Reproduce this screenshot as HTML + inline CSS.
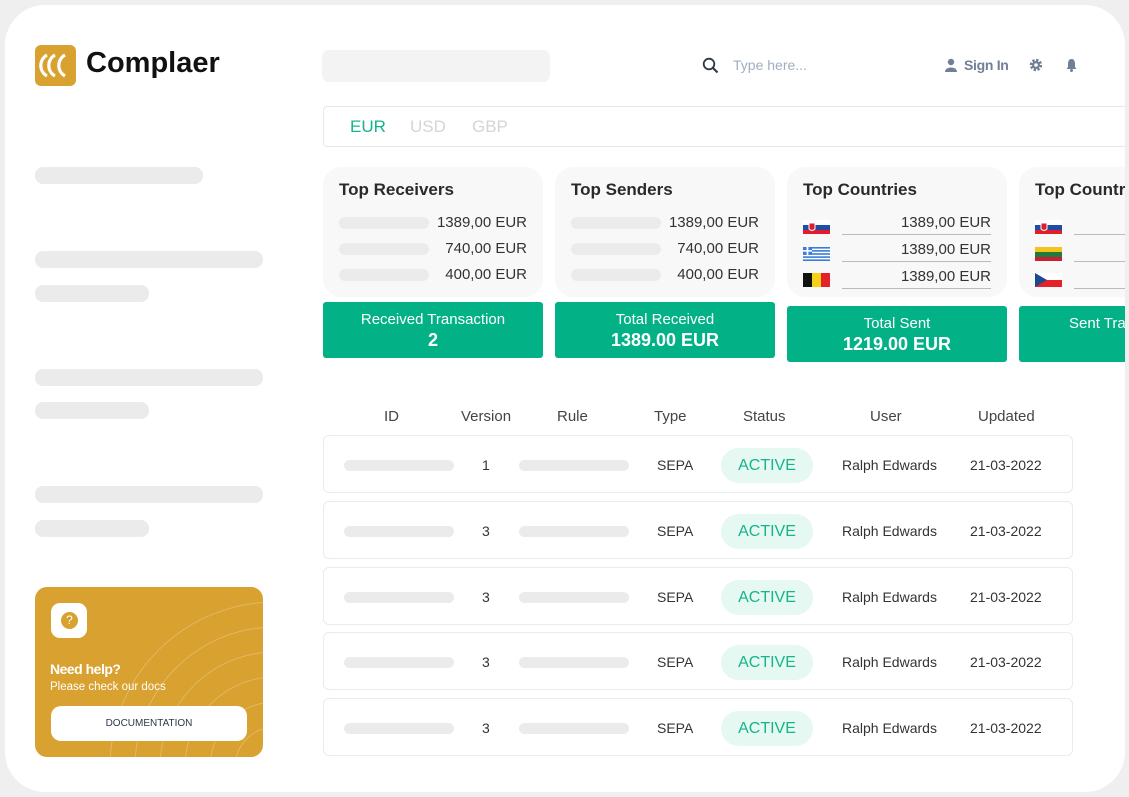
<!DOCTYPE html>
<html style="overflow:hidden"><head><style>
*{box-sizing:border-box;margin:0;padding:0}
html,body{width:1129px;height:797px;overflow:hidden}
body{background:#efefef;font-family:"Liberation Sans",sans-serif;position:relative}
.card{position:absolute;left:5px;top:5px;width:1120px;height:787px;background:#fff;border-radius:40px}
.abs{position:absolute}
.sk{position:absolute;background:#ebebeb;border-radius:8px}
.stat{position:absolute;top:167px;width:220px;height:130px;background:#f8f8f8;border-radius:18px}
.stat h3{position:absolute;left:16px;top:13px;font-size:17px;font-weight:bold;color:#2a2a2a}
.line{position:absolute;left:16px;width:90px;height:12px;background:#ebebeb;border-radius:6px}
.amt{position:absolute;right:16px;font-size:15px;color:#333}
.green{position:absolute;width:220px;background:#02b286;border-radius:3px;color:#fff;text-align:center}
.green .a{font-size:15px;margin-top:9px}
.green .b{font-size:18px;font-weight:bold;margin-top:2px}
.row{position:absolute;left:323px;width:750px;height:58px;border:1px solid #e6ecf0;border-radius:6px}
.row .s1{position:absolute;left:20px;top:24px;width:110px;height:11px;background:#ebebeb;border-radius:6px}
.row .s2{position:absolute;left:195px;top:24px;width:110px;height:11px;background:#ebebeb;border-radius:6px}
.row .t{position:absolute;top:21px;font-size:14px;color:#333}
.badge{position:absolute;left:397px;top:12px;width:92px;height:35px;border-radius:18px;background:#e5f8f1;color:#16b48a;font-size:16px;text-align:center;line-height:35px}
.hd{position:absolute;top:408px;font-size:15px;color:#444}
.flag{position:absolute;left:16px;width:27px;height:14px}
.ul{position:absolute;left:55px;right:16px;height:1px;background:#bbb}
</style></head><body>
<div class="card"></div>
<!-- logo -->
<div class="abs" style="left:35px;top:45px;width:41px;height:41px;background:#d8a130;border-radius:6px;overflow:hidden">
<svg width="41" height="41" viewBox="0 0 41 41"><g fill="none" stroke="#fff" stroke-width="3.2"><path d="M12 10 A12 12 0 0 0 12 31"/><path d="M20 10 A12 12 0 0 0 20 31"/><path d="M30 10 A12 12 0 0 0 30 31"/></g></svg></div>
<div class="abs" style="left:86px;top:47px;font-size:29px;font-weight:bold;color:#111">Complaer</div>
<!-- sidebar skeletons -->
<div class="sk" style="left:35px;top:167px;width:168px;height:17px"></div>
<div class="sk" style="left:35px;top:251px;width:228px;height:17px"></div>
<div class="sk" style="left:35px;top:285px;width:114px;height:17px"></div>
<div class="sk" style="left:35px;top:369px;width:228px;height:17px"></div>
<div class="sk" style="left:35px;top:402px;width:114px;height:17px"></div>
<div class="sk" style="left:35px;top:486px;width:228px;height:17px"></div>
<div class="sk" style="left:35px;top:520px;width:114px;height:17px"></div>
<!-- help -->
<div class="abs" style="left:35px;top:587px;width:228px;height:170px;background:#d8a130;border-radius:12px;overflow:hidden">
<svg class="abs" style="left:0;top:0" width="228" height="170"><g fill="none" stroke="rgba(255,255,255,0.25)" stroke-width="1"><circle cx="240" cy="180" r="40"/><circle cx="240" cy="180" r="65"/><circle cx="240" cy="180" r="90"/><circle cx="240" cy="180" r="115"/><circle cx="240" cy="180" r="140"/><circle cx="240" cy="180" r="165"/></g></svg>
<div class="abs" style="left:16px;top:16px;width:36px;height:35px;background:#fff;border-radius:9px"><div style="position:absolute;left:10px;top:9px;width:17px;height:17px;border-radius:50%;background:#d8a130;color:#fff;font-size:12px;text-align:center;line-height:17px">?</div></div>
<div class="abs" style="left:15px;top:74px;color:#fff;font-size:14px;font-weight:bold;letter-spacing:-0.5px">Need help?</div>
<div class="abs" style="left:15px;top:94px;color:#fff;font-size:11.5px">Please check our docs</div>
<div class="abs" style="left:16px;top:119px;width:196px;height:35px;background:#fff;border-radius:10px;font-size:10px;color:#2d3748;text-align:center;line-height:35px">DOCUMENTATION</div>
</div>
<!-- header -->
<div class="abs" style="left:322px;top:50px;width:228px;height:32px;background:#f3f3f3;border-radius:7px"></div>
<svg class="abs" style="left:702px;top:57px" width="17" height="17" viewBox="0 0 17 17"><circle cx="7" cy="7" r="5.3" fill="none" stroke="#2d3748" stroke-width="1.8"/><path d="M11 11 L15.5 15.5" stroke="#2d3748" stroke-width="2"/></svg>
<div class="abs" style="left:733px;top:57px;font-size:14px;color:#a0aec0">Type here...</div>
<svg class="abs" style="left:944px;top:58px" width="14" height="14" viewBox="0 0 14 14"><circle cx="7" cy="4" r="3.2" fill="#718096"/><path d="M1 14 C1 8 13 8 13 14Z" fill="#718096"/></svg>
<div class="abs" style="left:964px;top:57px;font-size:14px;color:#718096;font-weight:bold;letter-spacing:-0.3px">Sign In</div>
<svg class="abs" style="left:1029px;top:58px" width="14" height="14" viewBox="0 0 14 14"><circle cx="7" cy="7" r="4.6" fill="none" stroke="#718096" stroke-width="3.2" stroke-dasharray="2.2 1.4"/><circle cx="7" cy="7" r="4" fill="#718096"/><circle cx="7" cy="7" r="1.8" fill="#fff"/></svg>
<svg class="abs" style="left:1065px;top:58px" width="13" height="14" viewBox="0 0 13 14"><path d="M6.5 1 C3.5 1 3 4 3 6 L3 9 L1.5 11 L11.5 11 L10 9 L10 6 C10 4 9.5 1 6.5 1Z" fill="#718096"/><circle cx="6.5" cy="12.5" r="1.5" fill="#718096"/></svg>
<!-- currency -->
<div class="abs" style="left:323px;top:106px;width:810px;height:41px;border:1px solid #e8e8e8;border-radius:4px"></div>
<div class="abs" style="left:350px;top:117px;font-size:17px;color:#16b48a">EUR</div>
<div class="abs" style="left:410px;top:117px;font-size:17px;color:#d5d5d5">USD</div>
<div class="abs" style="left:472px;top:117px;font-size:17px;color:#d5d5d5">GBP</div>
<!-- stats -->
<div class="stat" style="left:323px"><h3>Top Receivers</h3>
<div class="line" style="top:50px"></div><div class="amt" style="top:47px">1389,00 EUR</div>
<div class="line" style="top:76px"></div><div class="amt" style="top:73px">740,00 EUR</div>
<div class="line" style="top:102px"></div><div class="amt" style="top:99px">400,00 EUR</div></div>
<div class="stat" style="left:555px"><h3>Top Senders</h3>
<div class="line" style="top:50px"></div><div class="amt" style="top:47px">1389,00 EUR</div>
<div class="line" style="top:76px"></div><div class="amt" style="top:73px">740,00 EUR</div>
<div class="line" style="top:102px"></div><div class="amt" style="top:99px">400,00 EUR</div></div>
<div class="stat" style="left:787px"><h3>Top Countries</h3>
<svg class="flag" style="top:53px" viewBox="0 0 27 14"><rect width="27" height="5" fill="#fff"/><rect y="5" width="27" height="5" fill="#1f4ea8"/><rect y="10" width="27" height="4" fill="#e01e2b"/><path d="M6 3 h6 v6 q-3 3 -6 0z" fill="#e01e2b" stroke="#fff"/></svg>
<div class="amt" style="top:47px">1389,00 EUR</div><div class="ul" style="top:67px"></div>
<svg class="flag" style="top:80px" viewBox="0 0 27 14"><rect width="27" height="14" fill="#fff"/><g fill="#3a7bd5"><rect y="0" width="27" height="1.6"/><rect y="3.1" width="27" height="1.6"/><rect y="6.2" width="27" height="1.6"/><rect y="9.3" width="27" height="1.6"/><rect y="12.4" width="27" height="1.6"/><rect width="9" height="7.8"/></g><rect x="3.6" width="1.8" height="7.8" fill="#fff"/><rect y="3.1" width="9" height="1.6" fill="#fff"/></svg>
<div class="amt" style="top:74px">1389,00 EUR</div><div class="ul" style="top:94px"></div>
<svg class="flag" style="top:106px" viewBox="0 0 27 14"><rect width="9" height="14" fill="#111"/><rect x="9" width="9" height="14" fill="#f7d117"/><rect x="18" width="9" height="14" fill="#e3222b"/></svg>
<div class="amt" style="top:101px">1389,00 EUR</div><div class="ul" style="top:121px"></div></div>
<div class="stat" style="left:1019px"><h3>Top Countries</h3>
<svg class="flag" style="top:53px" viewBox="0 0 27 14"><rect width="27" height="5" fill="#fff"/><rect y="5" width="27" height="5" fill="#1f4ea8"/><rect y="10" width="27" height="4" fill="#e01e2b"/><path d="M6 3 h6 v6 q-3 3 -6 0z" fill="#e01e2b" stroke="#fff"/></svg><div class="ul" style="top:67px"></div>
<svg class="flag" style="top:80px" viewBox="0 0 27 14"><rect width="27" height="5" fill="#f6c21c"/><rect y="5" width="27" height="5" fill="#1f7a3d"/><rect y="10" width="27" height="4" fill="#c8202f"/></svg><div class="ul" style="top:94px"></div>
<svg class="flag" style="top:106px" viewBox="0 0 27 14"><rect width="27" height="7" fill="#fff"/><rect y="7" width="27" height="7" fill="#e3222b"/><path d="M0 0 L12 7 L0 14Z" fill="#1d4a8c"/></svg><div class="ul" style="top:121px"></div></div>
<div class="green" style="left:323px;top:302px;height:56px"><div class="a">Received Transaction</div><div class="b">2</div></div>
<div class="green" style="left:555px;top:302px;height:56px"><div class="a">Total Received</div><div class="b">1389.00 EUR</div></div>
<div class="green" style="left:787px;top:306px;height:56px"><div class="a">Total Sent</div><div class="b">1219.00 EUR</div></div>
<div class="green" style="left:1019px;top:306px;height:56px;text-align:left;overflow:hidden;white-space:nowrap"><div class="a" style="padding-left:50px">Sent Transaction</div></div>
<div class="abs" style="left:1125px;top:0;width:4px;height:797px;background:#efefef"></div>
<!-- table -->
<div class="hd" style="left:384px">ID</div>
<div class="hd" style="left:461px">Version</div>
<div class="hd" style="left:557px">Rule</div>
<div class="hd" style="left:654px">Type</div>
<div class="hd" style="left:743px">Status</div>
<div class="hd" style="left:870px">User</div>
<div class="hd" style="left:978px">Updated</div>
<div class="row" style="top:435px"><div class="s1"></div><div class="t" style="left:158px">1</div><div class="s2"></div><div class="t" style="left:333px">SEPA</div><div class="badge">ACTIVE</div><div class="t" style="left:518px">Ralph Edwards</div><div class="t" style="left:646px">21-03-2022</div></div>
<div class="row" style="top:501px"><div class="s1"></div><div class="t" style="left:158px">3</div><div class="s2"></div><div class="t" style="left:333px">SEPA</div><div class="badge">ACTIVE</div><div class="t" style="left:518px">Ralph Edwards</div><div class="t" style="left:646px">21-03-2022</div></div>
<div class="row" style="top:567px"><div class="s1"></div><div class="t" style="left:158px">3</div><div class="s2"></div><div class="t" style="left:333px">SEPA</div><div class="badge">ACTIVE</div><div class="t" style="left:518px">Ralph Edwards</div><div class="t" style="left:646px">21-03-2022</div></div>
<div class="row" style="top:632px"><div class="s1"></div><div class="t" style="left:158px">3</div><div class="s2"></div><div class="t" style="left:333px">SEPA</div><div class="badge">ACTIVE</div><div class="t" style="left:518px">Ralph Edwards</div><div class="t" style="left:646px">21-03-2022</div></div>
<div class="row" style="top:698px"><div class="s1"></div><div class="t" style="left:158px">3</div><div class="s2"></div><div class="t" style="left:333px">SEPA</div><div class="badge">ACTIVE</div><div class="t" style="left:518px">Ralph Edwards</div><div class="t" style="left:646px">21-03-2022</div></div>
</body></html>
